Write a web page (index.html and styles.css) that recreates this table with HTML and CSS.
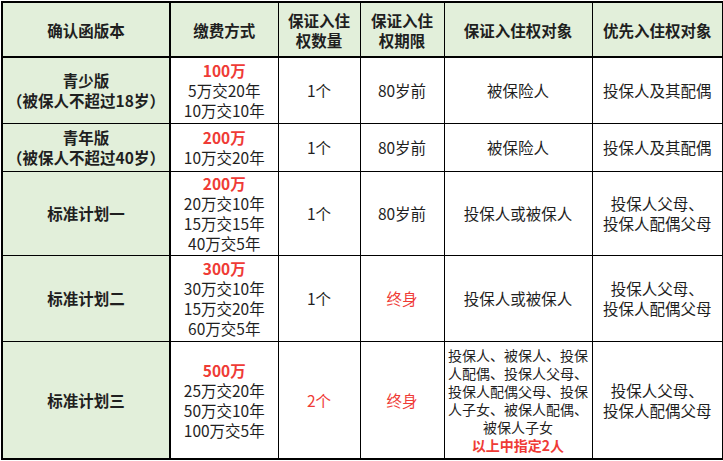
FILE: index.html
```html
<!DOCTYPE html>
<html lang="zh-CN">
<head>
<meta charset="utf-8">
<link rel="stylesheet" href="styles.css">
</head>
<body>
<table class="plan">
  <colgroup>
    <col class="c1"><col class="c2"><col class="c3"><col class="c4"><col class="c5"><col class="c6">
  </colgroup>
  <thead>
    <tr class="r0">
      <th>确认函版本</th>
      <th>缴费方式</th>
      <th>保证入住<br>权数量</th>
      <th>保证入住<br>权期限</th>
      <th>保证入住权对象</th>
      <th>优先入住权对象</th>
    </tr>
  </thead>
  <tbody>
    <tr class="r1">
      <td class="name">青少版<br>（被保人不超过18岁）</td>
      <td><span class="amt">100万</span><br>5万交20年<br>10万交10年</td>
      <td>1个</td>
      <td>80岁前</td>
      <td>被保险人</td>
      <td>投保人及其配偶</td>
    </tr>
    <tr class="r2">
      <td class="name">青年版<br>（被保人不超过40岁）</td>
      <td><span class="amt">200万</span><br>10万交20年</td>
      <td>1个</td>
      <td>80岁前</td>
      <td>被保险人</td>
      <td>投保人及其配偶</td>
    </tr>
    <tr class="r3">
      <td class="name">标准计划一</td>
      <td><span class="amt">200万</span><br>20万交10年<br>15万交15年<br>40万交5年</td>
      <td>1个</td>
      <td>80岁前</td>
      <td>投保人或被保人</td>
      <td>投保人父母、<br>投保人配偶父母</td>
    </tr>
    <tr class="r4">
      <td class="name">标准计划二</td>
      <td><span class="amt">300万</span><br>30万交10年<br>15万交20年<br>60万交5年</td>
      <td>1个</td>
      <td class="red">终身</td>
      <td>投保人或被保人</td>
      <td>投保人父母、<br>投保人配偶父母</td>
    </tr>
    <tr class="r5">
      <td class="name">标准计划三</td>
      <td><span class="amt">500万</span><br>25万交20年<br>50万交10年<br>100万交5年</td>
      <td class="red">2个</td>
      <td class="red">终身</td>
      <td class="small">投保人、被保人、投保<br>人配偶、投保人父母、<br>投保人配偶父母、投保<br>人子女、被保人配偶、<br>被保人子女<br><span class="amt">以上中指定2人</span></td>
      <td>投保人父母、<br>投保人配偶父母</td>
    </tr>
  </tbody>
</table>
</body>
</html>
```

FILE: styles.css
```css
html, body {
  margin: 0;
  padding: 0;
  background: #ffffff;
}

.plan {
  margin: 1px 0 0 1px;
  width: 721px;
  border-collapse: collapse;
  table-layout: fixed;
  font-family: "Noto Sans CJK SC", "Noto Sans", sans-serif;
  font-size: 15.5px;
  line-height: 20px;
  color: #1f1f1f;
  border: 2px solid #000;
}

.c1 { width: 168px; }
.c2 { width: 108px; }
.c3 { width: 82px; }
.c4 { width: 84px; }
.c5 { width: 148px; }
.c6 { width: 131px; }

.plan th,
.plan td {
  border: 1px solid #000;
  padding: 0;
  text-align: center;
  vertical-align: middle;
}

.plan th {
  background: #e2efda;
  font-weight: bold;
  border-bottom: 2px solid #000;
}

.plan td.name {
  background: #e2efda;
  font-weight: bold;
  border-right: 2px solid #000;
}

.plan th:first-child {
  border-right: 2px solid #000;
}

.r0 { height: 55px; }
.r1 { height: 66px; }
.r2 { height: 48px; }
.r3 { height: 84px; }
.r4 { height: 86px; }
.r5 { height: 118px; }

.amt {
  color: #ef3b36;
  font-weight: bold;
}

.red {
  color: #ef3b36;
}

.plan td.small {
  font-size: 14px;
  line-height: 18px;
}
```
